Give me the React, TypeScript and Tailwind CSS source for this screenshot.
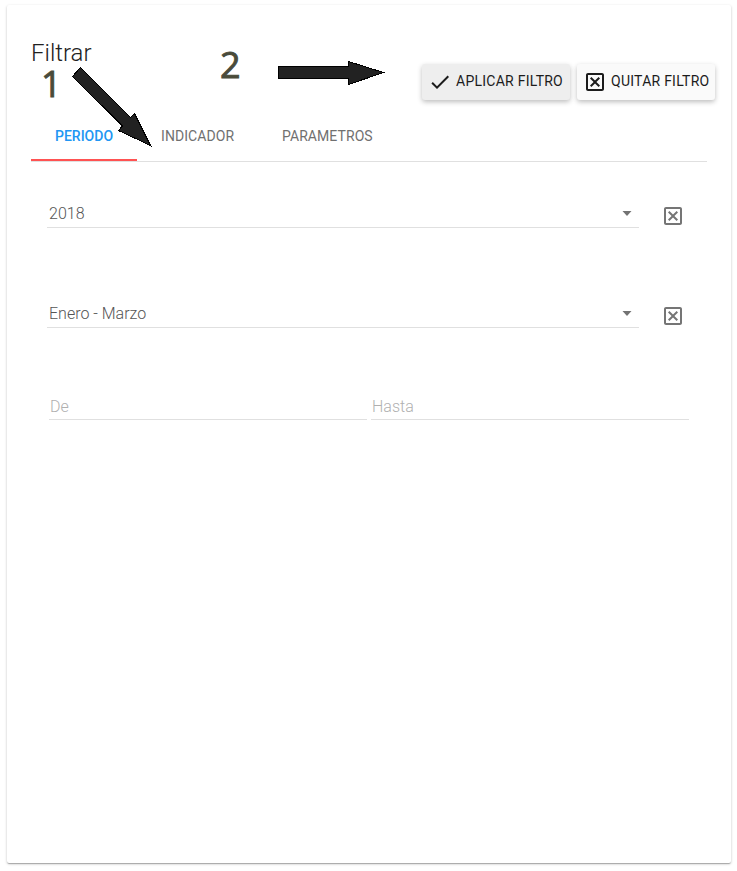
import React from "react";

function CloseBox({ className }: { className: string }) {
  return (
    <svg viewBox="0 0 24 24" className={className} fill="currentColor">
      <path d="M19 3H5c-1.1 0-2 .9-2 2v14c0 1.1.9 2 2 2h14c1.1 0 2-.9 2-2V5c0-1.1-.9-2-2-2zm0 16H5V5h14v14zM17 8.4L13.4 12L17 15.6L15.6 17L12 13.4L8.4 17L7 15.6L10.6 12L7 8.4L8.4 7L12 10.6L15.6 7L17 8.4z" />
    </svg>
  );
}

function SelectRow({ value }: { value: string }) {
  return (
    <div className="flex h-[28px]">
      <div className="flex h-[28px] w-[592px] items-center justify-between border-b border-[#e0e0e0] pr-[7px] pl-[2px]">
        <span className="text-[16px] leading-[26px] font-light text-[#555555]">{value}</span>
        <svg viewBox="0 0 10 5" className="h-[5px] w-[10px]" fill="#737373">
          <path d="M0.5 0h9L5 5z" />
        </svg>
      </div>
      <button className="mt-[4px] ml-[22px] h-6 w-6">
        <CloseBox className="h-6 w-6 text-[#757575]" />
      </button>
    </div>
  );
}

export default function App() {
  return (
    <div className="relative h-[871px] w-[737px] overflow-hidden bg-white pt-[5px] pl-[7px] font-['Roboto',sans-serif]">
      <div className="flex h-[858px] w-[724px] flex-col rounded-[2px] bg-white pl-6 shadow-[0_1px_3px_0_rgba(0,0,0,0.2),0_1px_1px_0_rgba(0,0,0,0.14),0_2px_1px_-1px_rgba(0,0,0,0.12)]">
        <header className="flex h-[106px] justify-between pr-4">
          <h1 className="pt-[32px] text-[24px] leading-[32px] font-light text-[#212121]">Filtrar</h1>
          <div className="mt-[59px] flex h-9 gap-[7.5px] text-[14px] font-normal tracking-[0.018em] whitespace-nowrap text-[#1c1c1c]">
            <button className="flex h-9 w-[148px] items-center rounded-[3px] bg-[#eeeeee] pl-[6.5px] shadow-[0_2px_5px_0_rgba(0,0,0,0.26)]">
              <svg viewBox="0 0 24 24" className="mr-[4px] h-6 w-6" fill="currentColor">
                <path d="M9 16.17L4.83 12l-1.42 1.41L9 19 21 7l-1.41-1.41z" />
              </svg>
              <span className="-mt-[1px]">APLICAR FILTRO</span>
            </button>
            <button className="flex h-9 w-[138px] items-center rounded-[3px] bg-[#fafafa] pl-[6px] shadow-[0_2px_5px_0_rgba(0,0,0,0.26)]">
              <CloseBox className="mr-[4px] h-6 w-6" />
              <span className="-mt-[1px]">QUITAR FILTRO</span>
            </button>
          </div>
        </header>
        <nav className="flex h-[51px] w-[676px] border-b border-[#e0e0e0] text-[14px] leading-[20px] font-normal tracking-[0.005em] text-[#707070]">
          <div className="h-[50px] w-[106px] border-b-2 border-[#ff5252] pt-[15px] pl-6 font-medium tracking-normal text-[#2196f3]">PERIODO</div>
          <div className="w-[121px] pt-[15px] pl-6">INDICADOR</div>
          <div className="w-[139px] pt-[15px] pl-6">PARAMETROS</div>
        </nav>
        <main className="pt-[38px] pl-4">
          <SelectRow value="2018" />
          <div className="h-[72px]" />
          <SelectRow value="Enero - Marzo" />
          <div className="mt-[64px] ml-[2px] flex gap-[4px] text-[16px] leading-[30px] font-light text-[#b0b0b0]">
            <div className="h-[28px] w-[318px] border-b border-[#e0e0e0] pl-[1px]">De</div>
            <div className="h-[28px] w-[318px] border-b border-[#e0e0e0] pl-[1px]">Hasta</div>
          </div>
        </main>
      </div>

      <span className="absolute top-[70px] left-[41px] font-['Open_Sans',sans-serif] text-[36px] leading-[28px] text-[#494b3a] [-webkit-text-stroke:0.9px_#494b3a]">1</span>
      <span className="absolute top-[51px] left-[220px] font-['Open_Sans',sans-serif] text-[36px] leading-[28px] text-[#494b3a] [-webkit-text-stroke:0.9px_#494b3a]">2</span>
      <svg className="absolute top-0 left-0 h-[180px] w-[400px]" viewBox="0 0 400 180" fill="#222222" stroke="#000000" shapeRendering="crispEdges">
        <path d="M80.5 67.5L72.5 76.5L122.5 126L118.5 130.5L150.5 145.5L134.5 113.5L130.5 117.5Z" />
        <path d="M278.5 66.5H348.5V61.5L383.5 72.5L348.5 84.5V78.5H278.5Z" />
      </svg>
    </div>
  );
}
